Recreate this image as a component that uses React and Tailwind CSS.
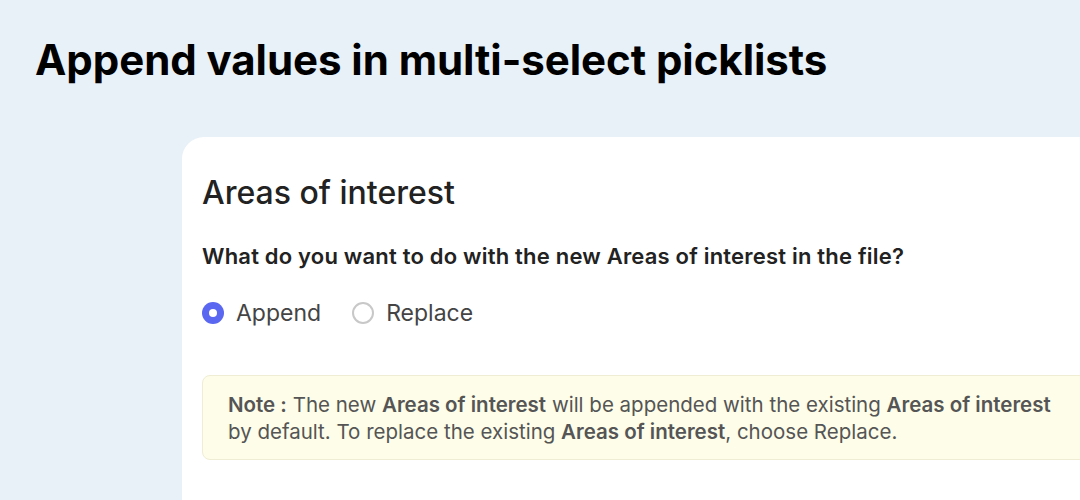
export default function App() {
  return (
    <div className="w-[1080px] h-[500px] overflow-hidden bg-[#e8f0f8] font-['Inter',sans-serif]">
      {/* Heading */}
      <h1 className="pl-[35px] pt-[34px] text-[42px] leading-[52px] font-bold text-black tracking-[-0.05px]">
        Append values in multi-select picklists
      </h1>

      {/* Card */}
      <div className="ml-[182px] mt-[51px] w-[960px] h-[400px] bg-white rounded-tl-[22px] pl-[20px] pt-[35px]">
        <h2 className="text-[32px] leading-[42px] font-medium text-[#222]">Areas of interest</h2>

        <p className="mt-[27px] text-[22px] leading-[30px] font-semibold text-[#222] tracking-[0.2px]">
          What do you want to do with the new Areas of interest in the file?
        </p>

        <div className="mt-[25px] flex items-center gap-[31px] text-[23px] text-[#444]">
          <label className="flex items-center gap-[12px]">
            <span className="w-[22px] h-[22px] rounded-full bg-[#5a67f0] flex items-center justify-center">
              <span className="w-[8px] h-[8px] rounded-full bg-white" />
            </span>
            Append
          </label>
          <label className="flex items-center gap-[12px]">
            <span className="w-[22px] h-[22px] rounded-full border-[2px] border-[#c8c8c8]" />
            Replace
          </label>
        </div>

        <div className="mt-[44px] w-[900px] border border-[#efedd4] bg-[#fdfde9] rounded-[8px] pl-[25px] pt-[15px] pb-[14px] text-[20.5px] leading-[27px] text-[#555]">
          <b className="font-semibold">Note :</b> The new <b className="font-semibold">Areas of interest</b> will be appended with the existing{' '}
          <b className="font-semibold">Areas of interest</b>
          <br />
          by default. To replace the existing <b className="font-semibold">Areas of interest</b>, choose Replace.
        </div>
      </div>
    </div>
  );
}
